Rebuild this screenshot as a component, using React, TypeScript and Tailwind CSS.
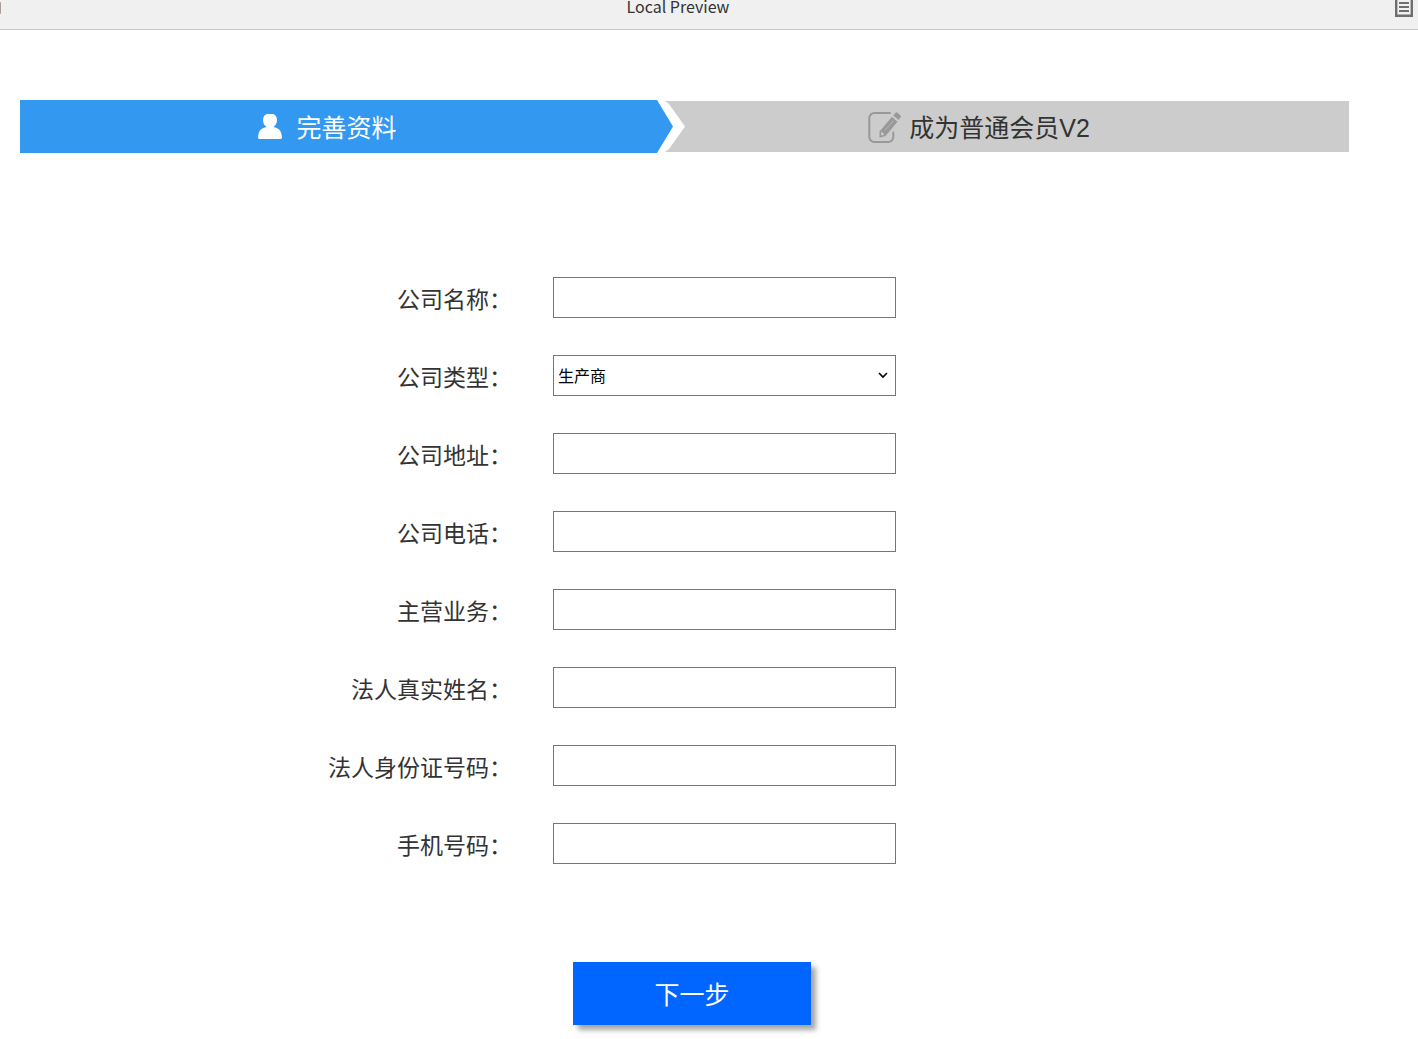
import React from 'react';

interface Field {
  id: string;
  label: string;
  options?: string[];
}

const FIELDS: Field[] = [
  { id: 'companyName', label: '公司名称' },
  { id: 'companyType', label: '公司类型', options: ['生产商'] },
  { id: 'companyAddress', label: '公司地址' },
  { id: 'companyPhone', label: '公司电话' },
  { id: 'mainBusiness', label: '主营业务' },
  { id: 'legalName', label: '法人真实姓名' },
  { id: 'legalIdNumber', label: '法人身份证号码' },
  { id: 'mobile', label: '手机号码' },
];

function UserIcon() {
  return (
    <svg className="w-6 h-[25px] shrink-0" viewBox="0 0 24 25" fill="#fff" aria-hidden="true">
      <path d="M8.800 0h6.400C18 1.200 19 3.500 19 6.200c0 3-1.500 5.300-3.600 6.800 4.800.8 7.600 3.200 8.300 8.200l.3 2.800-1 1H1l-1-1 .3-2.800c.7-5 3.500-7.400 8.300-8.200C6.500 11.500 5 9.200 5 6.200 5 3.500 6 1.200 8.800 0z" />
    </svg>
  );
}

function EditIcon() {
  return (
    <svg className="w-[34px] h-8 shrink-0" viewBox="0 0 34 32" fill="none" aria-hidden="true">
      <path
        d="M23 2H7.300a5 5 0 0 0-5 5v19a5 5 0 0 0 5 5h14a5 5 0 0 0 5-5v-4.500"
        stroke="#999"
        strokeWidth="2"
        strokeLinecap="round"
      />
      <path d="M25 5.800l5.500 4.900-12 14.300-6 1.800v-6.300z" fill="#999" />
      <path d="M26.300 4.400l2.200-2.600c.6-.7 1.300-.7 2-.1l3 2.700c.6.500.7 1.200.1 1.900l-2 2.700z" fill="#999" />
      <path d="M14.500 20.500l3 3-2.700.9-.9-.8z" fill="#ccc" />
      <path d="M18 19.500l8.500-10" stroke="#b3b3b3" strokeWidth="1" />
    </svg>
  );
}

function TopBar() {
  return (
    <header className="h-[30px] flex items-start bg-[#f0f0f0] border-b border-[#c8c8c8] font-['Noto_Sans_CJK_SC',sans-serif]">
      <div className="w-px h-3 mt-0.5 rounded-r bg-[#b09a98]" />
      <h1 className="flex-1 pr-[40px] text-center text-base leading-3 text-[#333]">Local Preview</h1>
      <svg className="w-[18px] h-[17px] mr-[5px] shrink-0" viewBox="0 0 18 17" fill="none" aria-hidden="true">
        <path d="M1.200 0v15.800h15.600V0" stroke="#6e6e6e" strokeWidth="2.400" />
        <path d="M4 3h10M4 7h10M4 11h10" stroke="#6e6e6e" strokeWidth="2" />
      </svg>
    </header>
  );
}

function Steps() {
  return (
    <ol className="flex items-center ml-5 mr-[69px] mt-[70px] text-[25px] leading-8">
      <li
        className="flex-[615] h-[53px] pr-[38px] flex items-center justify-center gap-[14px] bg-[#3399f0] text-white [clip-path:polygon(0_0,calc(100%-16px)_0,100%_50%,calc(100%-16px)_100%,0_100%)]"
        aria-current="step"
      >
        <UserIcon />
        <span className="pt-0.5">完善资料</span>
      </li>
      <li className="flex-[627] h-[51px] -ml-2 pr-[57px] flex items-center justify-center gap-2 bg-[#ccc] text-[#333] [clip-path:polygon(0_0,100%_0,100%_100%,0_100%,4px_calc(100%-3px),20px_50%,4px_3px)]">
        <EditIcon />
        <span className="pt-0.5">成为普通会员V2</span>
      </li>
    </ol>
  );
}

function FormRow({ field }: { field: Field }) {
  return (
    <div className="flex items-center">
      <label htmlFor={field.id} className="w-[39%] pr-[41px] pt-1 text-right text-[23px] leading-8 text-[#333]">
        {field.label}：
      </label>
      {field.options ? (
        <div className="relative w-[343px]">
          <select
            id={field.id}
            className="w-full h-[41px] pl-1 pt-0.5 appearance-none bg-white border border-[#767676] text-base text-black"
          >
            {field.options.map((option) => (
              <option key={option}>{option}</option>
            ))}
          </select>
          <svg
            className="absolute right-2 top-[17px] w-[10px] h-[7px] pointer-events-none"
            viewBox="0 0 10 7"
            fill="none"
            aria-hidden="true"
          >
            <path d="M1 1l4 4 4-4" stroke="#000" strokeWidth="1.600" />
          </svg>
        </div>
      ) : (
        <input id={field.id} type="text" className="w-[343px] h-[41px] px-1 bg-white border border-[#767676] text-base" />
      )}
    </div>
  );
}

export default function App() {
  return (
    <div className="bg-white font-['Liberation_Sans','Noto_Sans_CJK_SC',sans-serif]">
      <TopBar />
      <Steps />

      <form className="mt-[124px]" onSubmit={(e) => e.preventDefault()}>
        <div className="flex flex-col gap-[37px]">
          {FIELDS.map((field) => (
            <FormRow key={field.id} field={field} />
          ))}
        </div>

        <div className="flex justify-center mt-[98px] pb-3 pr-[34px]">
          <button
            type="submit"
            className="w-[238px] h-[63px] pt-0.5 bg-[#0066ff] text-white text-[25px] leading-8 cursor-pointer shadow-[5px_5px_5px_rgba(0,0,0,0.35)]"
          >
            下一步
          </button>
        </div>
      </form>
    </div>
  );
}
